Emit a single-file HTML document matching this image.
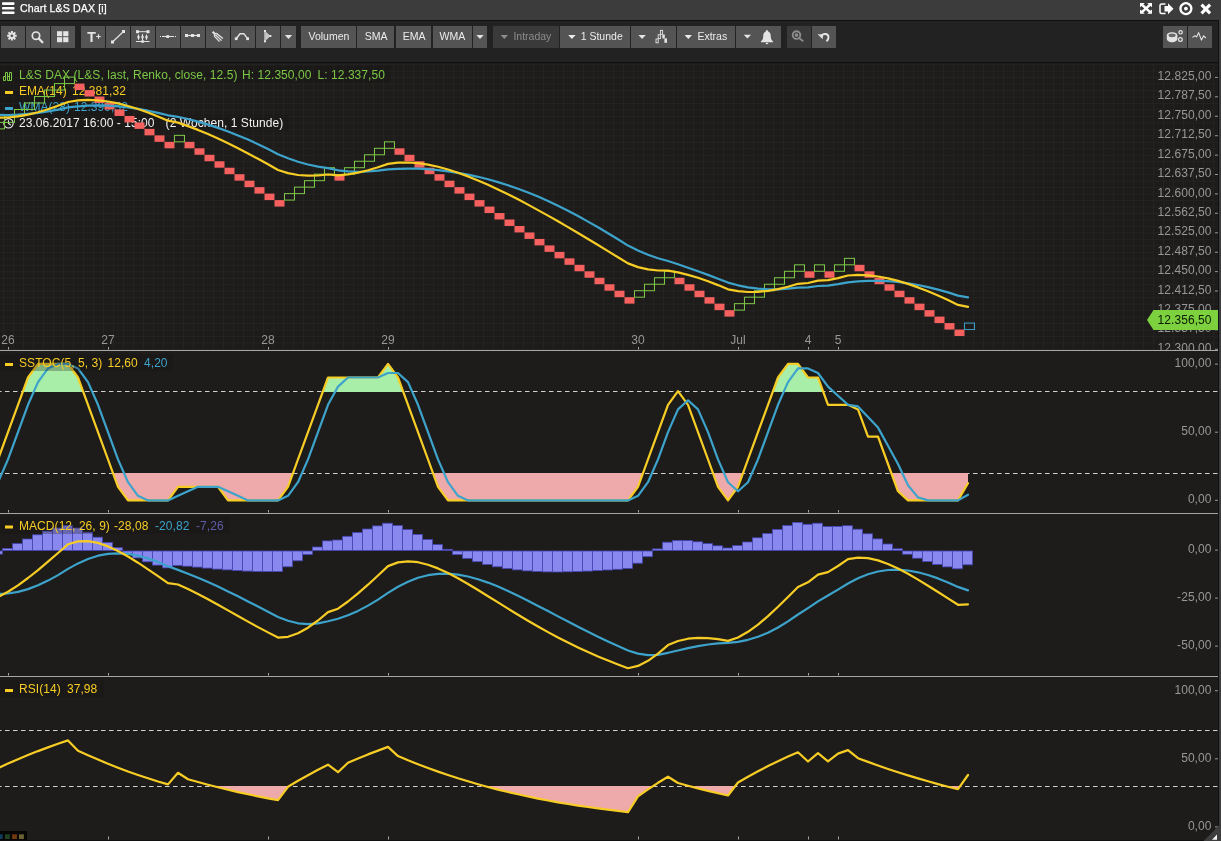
<!DOCTYPE html>
<html><head><meta charset="utf-8"><title>Chart L&amp;S DAX</title>
<style>
html,body{margin:0;padding:0;background:#1d1c1b;overflow:hidden}
body{width:1221px;height:841px;position:relative;font-family:"Liberation Sans",Arial,sans-serif;font-size:12px}
#title{will-change:transform;position:absolute;left:0;top:0;width:1221px;height:19.5px;background:#3c3c3c}
#title .t{position:absolute;left:20px;top:1px;color:#fff;font-size:10.6px;line-height:14px;white-space:nowrap;-webkit-text-stroke:0.25px #fff;letter-spacing:0.12px}
#l1{position:absolute;left:0;top:19.5px;width:1219px;height:1.7px;background:#0e0e0e}
#tool{will-change:transform;position:absolute;left:0;top:21px;width:1218.5px;height:40.5px;background:#222222}
#l2{position:absolute;left:0;top:61.5px;width:1219px;height:1.5px;background:#0e0e0e}
#rb{position:absolute;left:1218.2px;top:19.5px;width:1px;height:822px;background:#101010}
#rb2{position:absolute;left:1219.2px;top:0;width:1.8px;height:841px;background:#3c3c3c}
#bb{position:absolute;left:0;top:840px;width:1219px;height:1px;background:#101010}
.b{position:absolute;top:5px;height:22px;background:#545454;color:#ececec;display:flex;align-items:center;justify-content:center;white-space:nowrap;font-size:10.5px}
.b.d{background:#3a3a3a}
.b svg{display:block;flex:none}
</style></head><body>
<div id="title">
<svg width="16" height="17" style="position:absolute;left:0;top:0"><g fill="#fff"><rect x="2" y="2.3" width="12.5" height="2.6" rx="0.8"/><rect x="2" y="6.9" width="12.5" height="2.6" rx="0.8"/><rect x="2" y="11.5" width="12.5" height="2.6" rx="0.8"/></g></svg>
<div class="t">Chart L&amp;S DAX [i]</div>
<svg width="83" height="19" viewBox="0 0 83 19" style="position:absolute;left:1138px;top:0">
<g fill="#fff">
<g transform="translate(2,3) scale(1.0,0.9)"><path d="M0 0h4.8l-1.5 1.5l2.7 2.7l2.7-2.7l-1.5-1.5h4.8v4.8l-1.5-1.5l-2.7 2.7l2.7 2.7l1.5-1.5v4.8h-4.8l1.5-1.5l-2.7-2.7l-2.7 2.7l1.5 1.5h-4.8v-4.8l1.5 1.5l2.7-2.7l-2.7-2.7l-1.5 1.5z"/></g>
<path d="M26.5 6h3.5v-2.8l5.5 5.5l-5.5 5.5v-2.8h-3.5z"/>
<path d="M27.5 4h-4a1.5 1.5 0 0 0 -1.5 1.5v6.4a1.5 1.5 0 0 0 1.5 1.5h4" fill="none" stroke="#fff" stroke-width="1.5"/>
<path d="M47.9 2.0a6.6 6.6 0 1 0 0.010 0z M47.9 4.3a4.3 4.3 0 1 1 -0.010 0z" fill-rule="evenodd"/><circle cx="47.9" cy="8.6" r="1.9"/>
<path d="M62.4 5.8l2.2-2.2l3.2 3.2l3.2-3.2l2.2 2.2l-3.2 3.2l3.2 3.2l-2.2 2.2l-3.2-3.2l-3.2 3.2l-2.2-2.2l3.2-3.2z"/>
</g></svg>
</div>
<div id="l1"></div>
<div id="tool"><div class="b" style="left:1px;width:24px"><svg width="24" height="22" viewBox="0 0 24 22" ><g transform="translate(-1.1,-1.2)"><g stroke="#e4e4e4" stroke-width="2" stroke-linecap="butt"><path d="M12 6.2v9.6M7.2 11h9.6M8.6 7.6l6.8 6.8M15.4 7.6l-6.8 6.8"/></g><circle cx="12" cy="11" r="3.3" fill="#e4e4e4"/><circle cx="12" cy="11" r="1.4" fill="#545454"/></g></svg></div>
<div class="b" style="left:26px;width:24px"><svg width="24" height="22" viewBox="0 0 24 22" ><circle cx="10" cy="9.7" r="3.7" fill="none" stroke="#e4e4e4" stroke-width="1.7"/><path d="M12.8 12.5l3.6 3.7" stroke="#e4e4e4" stroke-width="2.3" stroke-linecap="round"/></svg></div>
<div class="b" style="left:51px;width:24px"><svg width="24" height="22" viewBox="0 0 24 22" ><g fill="#e4e4e4"><rect x="6" y="5.2" width="5.2" height="5"/><rect x="12.2" y="5.2" width="5.2" height="5"/><rect x="6" y="11.2" width="5.2" height="5"/><rect x="12.2" y="11.2" width="5.2" height="5"/></g></svg></div>
<div class="b" style="left:81px;width:24px"><svg width="24" height="22" viewBox="0 0 24 22" ><text x="6.3" y="16" font-family="Liberation Sans, Arial, sans-serif" font-weight="bold" font-size="14" fill="#e4e4e4">T</text><path d="M15.2 10.5h4.6M17.5 8.2v4.6" stroke="#e4e4e4" stroke-width="1.2"/></svg></div>
<div class="b" style="left:106px;width:24px"><svg width="24" height="22" viewBox="0 0 24 22" ><path d="M6.5 16L17.5 5.5" stroke="#e4e4e4" stroke-width="1.2"/><rect x="5" y="14.5" width="3" height="3" fill="#e4e4e4"/><rect x="16" y="4" width="3" height="3" fill="#e4e4e4"/></svg></div>
<div class="b" style="left:131px;width:24px"><svg width="24" height="22" viewBox="0 0 24 22" ><g stroke="#e4e4e4" stroke-width="1" fill="none"><path d="M6 5.7h11M5 15.5h13.5M7.5 8.5v5.3M11.5 8v6M15.5 8.5v5.3"/></g><g fill="#e4e4e4"><rect x="5" y="4.2" width="3" height="3"/><rect x="15.5" y="4.2" width="3" height="3"/><rect x="6.4" y="9.8" width="2.2" height="2.6"/><rect x="10.4" y="9.8" width="2.2" height="2.6"/><rect x="14.4" y="9.8" width="2.2" height="2.6"/><rect x="10.3" y="14.2" width="2.6" height="2.6"/></g></svg></div>
<div class="b" style="left:156px;width:24px"><svg width="24" height="22" viewBox="0 0 24 22" ><path d="M6 10.5h12" stroke="#e4e4e4" stroke-width="1"/><path d="M4 10.5h1M19 10.5h1" stroke="#e4e4e4" stroke-width="1"/><rect x="10.3" y="9.2" width="2.8" height="2.8" fill="#e4e4e4"/></svg></div>
<div class="b" style="left:181px;width:24px"><svg width="24" height="22" viewBox="0 0 24 22" ><path d="M5 9.5h14" stroke="#e4e4e4" stroke-width="1.2"/><g fill="#e4e4e4"><rect x="4" y="8" width="3" height="3"/><rect x="10" y="8" width="3" height="3"/><rect x="16" y="8" width="3" height="3"/></g></svg></div>
<div class="b" style="left:206px;width:24px"><svg width="24" height="22" viewBox="0 0 24 22" ><g stroke="#e4e4e4" fill="none"><path d="M6.6 5.7l2.1 2.1" stroke-width="2"/><path d="M10.4 7.3Q8 7.2 8.5 10.4M10.4 7.3l6.5 5.3M9.5 8.8l6.1 5.8M8.5 10.4l5.1 5.2" stroke-width="1.3"/></g></svg></div>
<div class="b" style="left:231px;width:24px"><svg width="24" height="22" viewBox="0 0 24 22" ><path d="M5.2 12.7L9 7.8h4l3.6 4.9" stroke="#e4e4e4" stroke-width="1.4" fill="none" stroke-linejoin="round"/><rect x="3.8" y="11.3" width="2.8" height="2.8" fill="#e4e4e4"/><rect x="15.2" y="11.3" width="2.8" height="2.8" fill="#e4e4e4"/></svg></div>
<div class="b" style="left:256px;width:24px"><svg width="24" height="22" viewBox="0 0 24 22" ><path d="M9 5v10.3" stroke="#e4e4e4" stroke-width="1.2"/><path d="M9.5 5.5l5 4.6l-5 4.6z" fill="#c9c9c9"/><g fill="#e4e4e4"><rect x="8" y="4" width="2" height="2"/><rect x="8" y="14.3" width="2" height="2"/><rect x="13.4" y="9" width="2" height="2"/></g></svg></div>
<div class="b" style="left:281px;width:14.5px"><svg width="14" height="22" viewBox="0 0 14 22"><path d="M3.8 9h7.4l-3.7 3.9z" fill="#e4e4e4"/></svg></div>
<div class="b" style="left:300.5px;width:55.2px"><span style="position:absolute;left:8px;top:-1.3px;line-height:22px;color:#ececec">Volumen</span></div>
<div class="b" style="left:357.2px;width:37px"><span style="position:absolute;left:7.5px;top:-1.3px;line-height:22px;color:#ececec">SMA</span></div>
<div class="b" style="left:395.5px;width:35.7px"><span style="position:absolute;left:7.2px;top:-1.3px;line-height:22px;color:#ececec">EMA</span></div>
<div class="b" style="left:432.5px;width:39.5px"><span style="position:absolute;left:7px;top:-1.3px;line-height:22px;color:#ececec">WMA</span></div>
<div class="b" style="left:473.2px;width:13.8px"><svg width="14" height="22" viewBox="0 0 14 22"><path d="M3.3 9h7.4l-3.7 3.9z" fill="#e4e4e4"/></svg></div>
<div class="b d" style="left:493.2px;width:65.5px"><svg width="22" height="22" viewBox="0 0 22 22" style="position:absolute;left:0;top:0"><path d="M7.6 9h7.4l-3.7 3.9z" fill="#8c8c8c"/></svg><span style="position:absolute;left:20.2px;top:-1.3px;line-height:22px;color:#8c8c8c">Intraday</span></div>
<div class="b" style="left:559.9px;width:70.1px"><svg width="22" height="22" viewBox="0 0 22 22" style="position:absolute;left:0;top:0"><path d="M8.2 9h7.4l-3.7 3.9z" fill="#ececec"/></svg><span style="position:absolute;left:20.8px;top:-1.3px;line-height:22px;color:#ececec">1 Stunde</span></div>
<div class="b" style="left:631.2px;width:44.5px"><svg width="44" height="22" viewBox="0 0 44 22" style="position:absolute;left:0;top:0"><path d="M7.4 9h7.4l-3.7 3.9z" fill="#e4e4e4"/><g transform="translate(24.5,0)"><g fill="none" stroke="#e4e4e4" stroke-width="0.9"><rect x="0.5" y="13" width="2.2" height="3.8"/><rect x="2.7" y="8.7" width="2.2" height="3.9"/><rect x="4.9" y="4.4" width="2.2" height="3.9"/></g><g fill="#e4e4e4"><rect x="6.8" y="8.5" width="2.5" height="4"/><rect x="8.9" y="12.4" width="2.6" height="4.4"/></g></g></svg></div>
<div class="b" style="left:677.2px;width:57.8px"><svg width="22" height="22" viewBox="0 0 22 22" style="position:absolute;left:0;top:0"><path d="M7.6 9h7.4l-3.7 3.9z" fill="#ececec"/></svg><span style="position:absolute;left:20.2px;top:-1.3px;line-height:22px;color:#ececec">Extras</span></div>
<div class="b" style="left:736.2px;width:45px"><svg width="45" height="22" viewBox="0 0 45 22" style="position:absolute;left:0;top:0"><path d="M7.7 8.7h7.4l-3.7 3.9z" fill="#e4e4e4"/><g transform="translate(19,0)"><path d="M12 4.3c-0.8 0-1.2 0.5-1.2 1.2c-2 0.8-2.6 2.7-2.6 5c0 2.4-0.9 3.7-2.3 5.1v0.6h12.2v-0.6c-1.4-1.4-2.3-2.7-2.3-5.1c0-2.3-0.6-4.2-2.6-5c0-0.7-0.4-1.2-1.2-1.2z" fill="#e4e4e4"/><rect x="10.8" y="16.8" width="2.4" height="1.3" fill="#e4e4e4"/></g></svg></div>
<div class="b d" style="left:787.2px;width:23.5px"><svg width="24" height="22" viewBox="0 0 24 22" ><circle cx="9.5" cy="9.1" r="3.8" fill="none" stroke="#8c8c8c" stroke-width="1.9"/><circle cx="9.5" cy="9.1" r="1.9" fill="#8c8c8c"/><path d="M12.2 12l4 3.4" stroke="#8c8c8c" stroke-width="1.9"/></svg></div>
<div class="b" style="left:812.2px;width:24px"><svg width="24" height="22" viewBox="0 0 24 22" ><path d="M9.5 9.5c2.5-2.6 6.8-1.8 7 1.5c0.1 1.8-0.8 3.2-2 4.4" fill="none" stroke="#e4e4e4" stroke-width="1.9"/><path d="M5.6 8.2l5.6 0.3l-0.6 4.8z" fill="#e4e4e4"/></svg></div>
<div class="b" style="left:1163px;width:24px"><svg width="24" height="22" viewBox="0 0 24 22" ><g fill="none" stroke="#e4e4e4" stroke-width="1.2"><circle cx="17.6" cy="6.3" r="1.7"/><circle cx="17.4" cy="13.5" r="1.9"/></g><path d="M3.8 9.5c0-4.4 10.6-4.4 10.6 0v3.2c0 4.6-10.6 4.6-10.6 0z" fill="#e4e4e4"/><ellipse cx="9.1" cy="9.3" rx="3.6" ry="1.9" fill="#6a6a6a"/></svg></div>
<div class="b" style="left:1188px;width:24px"><svg width="24" height="22" viewBox="0 0 24 22" ><path d="M4.4 11.4l2.7-1.6l1.6 1.1l1.9-4.3l2.9 7.5l2.2-4.3l2.1 2.2" fill="none" stroke="#e4e4e4" stroke-width="1.1" stroke-linejoin="round"/></svg></div></div>
<div id="l2"></div>
<svg width="1221" height="841" viewBox="0 0 1221 841" style="position:absolute;left:0;top:0;will-change:transform" font-family="Liberation Sans, Arial, sans-serif" font-size="12" letter-spacing="0.06">
<defs><pattern id="grid" x="3" y="77.10" width="10" height="6.473" patternUnits="userSpaceOnUse"><path d="M0.5 0V6.473 M0 0.5H10" stroke="#252322" stroke-width="1" fill="none"/></pattern>
<clipPath id="cm"><rect x="0" y="63" width="1218" height="287"/></clipPath>
<clipPath id="cs"><rect x="0" y="351" width="1218" height="162"/></clipPath>
<clipPath id="cd"><rect x="0" y="514" width="1218" height="162"/></clipPath>
<clipPath id="cr"><rect x="0" y="677" width="1218" height="162"/></clipPath>
<clipPath id="c80"><rect x="0" y="351" width="1218" height="41"/></clipPath>
<clipPath id="c20"><rect x="0" y="473" width="1218" height="40"/></clipPath>
<clipPath id="c30"><rect x="0" y="786" width="1218" height="54"/></clipPath>
</defs>
<rect x="0" y="63" width="1218" height="287" fill="url(#grid)"/>
<rect x="0" y="66" width="390" height="17" fill="#141313" fill-opacity="0.28"/>
<g stroke="#7cc845" fill="none" stroke-width="1"><path d="M3.5 80.5v-4h2v4z M5.5 77v-4.5h2v8 M7.5 80.5h2v-4h-2 M9.5 77v-4.5h2v8h-2"/></g>
<text x="19" y="79" fill="#7cc845">L&amp;S DAX (L&amp;S, last, Renko, close, 12.5)</text>
<text x="242" y="79" fill="#7cc845">H: 12.350,00</text>
<text x="317.5" y="79" fill="#7cc845">L: 12.337,50</text>
<rect x="0" y="83" width="130" height="16" fill="#141313" fill-opacity="0.28"/>
<rect x="5" y="91" width="8" height="3" fill="#f7cd25"/>
<text x="19" y="95" fill="#f7cd25">EMA(14)</text><text x="72" y="95" fill="#f7cd25">12.381,32</text>
<rect x="0" y="99" width="133" height="16" fill="#141313" fill-opacity="0.28"/>
<rect x="5" y="107" width="8" height="3" fill="#3da3cb"/>
<text x="19" y="111" fill="#3da3cb">WMA(28)</text><text x="74" y="111" fill="#3da3cb">12.399,52</text>
<rect x="0" y="115" width="288" height="16" fill="#141313" fill-opacity="0.28"/>
<circle cx="8.5" cy="123.3" r="4.7" fill="none" stroke="#f0f0f0" stroke-width="1.1"/><path d="M8.5 120.2v3.2l2.4 1.7" stroke="#f0f0f0" stroke-width="1.1" fill="none"/>
<text x="19" y="127" fill="#f2f2f2">23.06.2017 16:00 - 15:00</text><text x="165.6" y="127" fill="#f2f2f2">(2 Wochen, 1 Stunde)</text>
<g clip-path="url(#cm)">
<rect x="-5.5" y="122.41" width="10" height="6.47" fill="none" stroke="#7cc845" stroke-width="1"/>
<rect x="4.5" y="115.94" width="10" height="6.47" fill="none" stroke="#7cc845" stroke-width="1"/>
<rect x="14.5" y="109.47" width="10" height="6.47" fill="none" stroke="#7cc845" stroke-width="1"/>
<rect x="24.5" y="102.99" width="10" height="6.47" fill="none" stroke="#7cc845" stroke-width="1"/>
<rect x="34.5" y="96.52" width="10" height="6.47" fill="none" stroke="#7cc845" stroke-width="1"/>
<rect x="44.5" y="90.05" width="10" height="6.47" fill="none" stroke="#7cc845" stroke-width="1"/>
<rect x="54.5" y="83.57" width="10" height="6.47" fill="none" stroke="#7cc845" stroke-width="1"/>
<rect x="64.5" y="77.10" width="10" height="6.47" fill="none" stroke="#7cc845" stroke-width="1"/>
<rect x="74.5" y="83.57" width="10" height="6.47" fill="#f4615f"/>
<rect x="84.5" y="90.05" width="10" height="6.47" fill="#f4615f"/>
<rect x="94.5" y="96.52" width="10" height="6.47" fill="#f4615f"/>
<rect x="104.5" y="102.99" width="10" height="6.47" fill="#f4615f"/>
<rect x="114.5" y="109.47" width="10" height="6.47" fill="#f4615f"/>
<rect x="124.5" y="115.94" width="10" height="6.47" fill="#f4615f"/>
<rect x="134.5" y="122.41" width="10" height="6.47" fill="#f4615f"/>
<rect x="144.5" y="128.88" width="10" height="6.47" fill="#f4615f"/>
<rect x="154.5" y="135.36" width="10" height="6.47" fill="#f4615f"/>
<rect x="164.5" y="141.83" width="10" height="6.47" fill="#f4615f"/>
<rect x="174.5" y="135.36" width="10" height="6.47" fill="none" stroke="#7cc845" stroke-width="1"/>
<rect x="184.5" y="141.83" width="10" height="6.47" fill="#f4615f"/>
<rect x="194.5" y="148.30" width="10" height="6.47" fill="#f4615f"/>
<rect x="204.5" y="154.78" width="10" height="6.47" fill="#f4615f"/>
<rect x="214.5" y="161.25" width="10" height="6.47" fill="#f4615f"/>
<rect x="224.5" y="167.72" width="10" height="6.47" fill="#f4615f"/>
<rect x="234.5" y="174.19" width="10" height="6.47" fill="#f4615f"/>
<rect x="244.5" y="180.67" width="10" height="6.47" fill="#f4615f"/>
<rect x="254.5" y="187.14" width="10" height="6.47" fill="#f4615f"/>
<rect x="264.5" y="193.61" width="10" height="6.47" fill="#f4615f"/>
<rect x="274.5" y="200.09" width="10" height="6.47" fill="#f4615f"/>
<rect x="284.5" y="193.61" width="10" height="6.47" fill="none" stroke="#7cc845" stroke-width="1"/>
<rect x="294.5" y="187.14" width="10" height="6.47" fill="none" stroke="#7cc845" stroke-width="1"/>
<rect x="304.5" y="180.67" width="10" height="6.47" fill="none" stroke="#7cc845" stroke-width="1"/>
<rect x="314.5" y="174.19" width="10" height="6.47" fill="none" stroke="#7cc845" stroke-width="1"/>
<rect x="324.5" y="167.72" width="10" height="6.47" fill="none" stroke="#7cc845" stroke-width="1"/>
<rect x="334.5" y="174.19" width="10" height="6.47" fill="#f4615f"/>
<rect x="344.5" y="167.72" width="10" height="6.47" fill="none" stroke="#7cc845" stroke-width="1"/>
<rect x="354.5" y="161.25" width="10" height="6.47" fill="none" stroke="#7cc845" stroke-width="1"/>
<rect x="364.5" y="154.78" width="10" height="6.47" fill="none" stroke="#7cc845" stroke-width="1"/>
<rect x="374.5" y="148.30" width="10" height="6.47" fill="none" stroke="#7cc845" stroke-width="1"/>
<rect x="384.5" y="141.83" width="10" height="6.47" fill="none" stroke="#7cc845" stroke-width="1"/>
<rect x="394.5" y="148.30" width="10" height="6.47" fill="#f4615f"/>
<rect x="404.5" y="154.78" width="10" height="6.47" fill="#f4615f"/>
<rect x="414.5" y="161.25" width="10" height="6.47" fill="#f4615f"/>
<rect x="424.5" y="167.72" width="10" height="6.47" fill="#f4615f"/>
<rect x="434.5" y="174.19" width="10" height="6.47" fill="#f4615f"/>
<rect x="444.5" y="180.67" width="10" height="6.47" fill="#f4615f"/>
<rect x="454.5" y="187.14" width="10" height="6.47" fill="#f4615f"/>
<rect x="464.5" y="193.61" width="10" height="6.47" fill="#f4615f"/>
<rect x="474.5" y="200.09" width="10" height="6.47" fill="#f4615f"/>
<rect x="484.5" y="206.56" width="10" height="6.47" fill="#f4615f"/>
<rect x="494.5" y="213.03" width="10" height="6.47" fill="#f4615f"/>
<rect x="504.5" y="219.51" width="10" height="6.47" fill="#f4615f"/>
<rect x="514.5" y="225.98" width="10" height="6.47" fill="#f4615f"/>
<rect x="524.5" y="232.45" width="10" height="6.47" fill="#f4615f"/>
<rect x="534.5" y="238.92" width="10" height="6.47" fill="#f4615f"/>
<rect x="544.5" y="245.40" width="10" height="6.47" fill="#f4615f"/>
<rect x="554.5" y="251.87" width="10" height="6.47" fill="#f4615f"/>
<rect x="564.5" y="258.34" width="10" height="6.47" fill="#f4615f"/>
<rect x="574.5" y="264.82" width="10" height="6.47" fill="#f4615f"/>
<rect x="584.5" y="271.29" width="10" height="6.47" fill="#f4615f"/>
<rect x="594.5" y="277.76" width="10" height="6.47" fill="#f4615f"/>
<rect x="604.5" y="284.24" width="10" height="6.47" fill="#f4615f"/>
<rect x="614.5" y="290.71" width="10" height="6.47" fill="#f4615f"/>
<rect x="624.5" y="297.18" width="10" height="6.47" fill="#f4615f"/>
<rect x="634.5" y="290.71" width="10" height="6.47" fill="none" stroke="#7cc845" stroke-width="1"/>
<rect x="644.5" y="284.24" width="10" height="6.47" fill="none" stroke="#7cc845" stroke-width="1"/>
<rect x="654.5" y="277.76" width="10" height="6.47" fill="none" stroke="#7cc845" stroke-width="1"/>
<rect x="664.5" y="271.29" width="10" height="6.47" fill="none" stroke="#7cc845" stroke-width="1"/>
<rect x="674.5" y="277.76" width="10" height="6.47" fill="#f4615f"/>
<rect x="684.5" y="284.24" width="10" height="6.47" fill="#f4615f"/>
<rect x="694.5" y="290.71" width="10" height="6.47" fill="#f4615f"/>
<rect x="704.5" y="297.18" width="10" height="6.47" fill="#f4615f"/>
<rect x="714.5" y="303.65" width="10" height="6.47" fill="#f4615f"/>
<rect x="724.5" y="310.13" width="10" height="6.47" fill="#f4615f"/>
<rect x="734.5" y="303.65" width="10" height="6.47" fill="none" stroke="#7cc845" stroke-width="1"/>
<rect x="744.5" y="297.18" width="10" height="6.47" fill="none" stroke="#7cc845" stroke-width="1"/>
<rect x="754.5" y="290.71" width="10" height="6.47" fill="none" stroke="#7cc845" stroke-width="1"/>
<rect x="764.5" y="284.24" width="10" height="6.47" fill="none" stroke="#7cc845" stroke-width="1"/>
<rect x="774.5" y="277.76" width="10" height="6.47" fill="none" stroke="#7cc845" stroke-width="1"/>
<rect x="784.5" y="271.29" width="10" height="6.47" fill="none" stroke="#7cc845" stroke-width="1"/>
<rect x="794.5" y="264.82" width="10" height="6.47" fill="none" stroke="#7cc845" stroke-width="1"/>
<rect x="804.5" y="271.29" width="10" height="6.47" fill="#f4615f"/>
<rect x="814.5" y="264.82" width="10" height="6.47" fill="none" stroke="#7cc845" stroke-width="1"/>
<rect x="824.5" y="271.29" width="10" height="6.47" fill="#f4615f"/>
<rect x="834.5" y="264.82" width="10" height="6.47" fill="none" stroke="#7cc845" stroke-width="1"/>
<rect x="844.5" y="258.34" width="10" height="6.47" fill="none" stroke="#7cc845" stroke-width="1"/>
<rect x="854.5" y="264.82" width="10" height="6.47" fill="#f4615f"/>
<rect x="864.5" y="271.29" width="10" height="6.47" fill="#f4615f"/>
<rect x="874.5" y="277.76" width="10" height="6.47" fill="#f4615f"/>
<rect x="884.5" y="284.24" width="10" height="6.47" fill="#f4615f"/>
<rect x="894.5" y="290.71" width="10" height="6.47" fill="#f4615f"/>
<rect x="904.5" y="297.18" width="10" height="6.47" fill="#f4615f"/>
<rect x="914.5" y="303.65" width="10" height="6.47" fill="#f4615f"/>
<rect x="924.5" y="310.13" width="10" height="6.47" fill="#f4615f"/>
<rect x="934.5" y="316.60" width="10" height="6.47" fill="#f4615f"/>
<rect x="944.5" y="323.07" width="10" height="6.47" fill="#f4615f"/>
<rect x="954.5" y="329.55" width="10" height="6.47" fill="#f4615f"/>
<rect x="964.5" y="323.07" width="10" height="6.47" fill="none" stroke="#3aa0c8" stroke-width="1"/>
</g>
<g clip-path="url(#cm)" fill="none" stroke-linejoin="round" stroke-linecap="round">
<polyline points="-2.0,114.9 8.0,115.0 18.0,114.7 28.0,113.9 38.0,112.9 48.0,111.4 58.0,109.6 68.0,107.4 78.0,106.3 88.0,105.6 98.0,105.4 108.0,105.7 118.0,106.4 128.0,107.5 138.0,108.9 148.0,110.7 158.0,112.9 168.0,115.3 178.0,116.8 188.0,119.0 198.0,121.6 208.0,124.6 218.0,127.9 228.0,131.5 238.0,135.4 248.0,139.6 258.0,144.2 268.0,149.1 278.0,154.2 288.0,158.3 298.0,161.7 308.0,164.5 318.0,166.6 328.0,168.1 338.0,170.3 348.0,171.4 358.0,171.8 368.0,171.5 378.0,170.7 388.0,169.4 398.0,168.8 408.0,168.6 418.0,168.7 428.0,169.2 438.0,170.1 448.0,171.3 458.0,172.8 468.0,174.7 478.0,176.8 488.0,179.3 498.0,182.1 508.0,185.3 518.0,188.7 528.0,192.5 538.0,196.5 548.0,200.9 558.0,205.7 568.0,210.7 578.0,216.0 588.0,221.6 598.0,227.3 608.0,233.2 618.0,239.3 628.0,245.6 638.0,250.6 648.0,254.8 658.0,258.3 668.0,261.0 678.0,264.3 688.0,267.7 698.0,271.2 708.0,274.9 718.0,278.7 728.0,282.6 738.0,285.3 748.0,287.3 758.0,288.6 768.0,289.3 778.0,289.3 788.0,288.7 798.0,287.6 808.0,287.3 818.0,286.0 828.0,285.6 838.0,284.2 848.0,282.3 858.0,281.4 868.0,280.9 878.0,280.8 888.0,281.2 898.0,282.0 908.0,283.3 918.0,285.0 928.0,287.1 938.0,289.6 948.0,292.4 958.0,295.6 968.0,297.4" stroke="#3da3cb" stroke-width="2.2"/>
<polyline points="-2.0,117.7 8.0,117.5 18.0,116.4 28.0,114.6 38.0,112.2 48.0,109.3 58.0,105.8 68.0,102.0 78.0,100.4 88.0,99.9 98.0,100.3 108.0,101.5 118.0,103.4 128.0,106.0 138.0,109.0 148.0,112.5 158.0,116.4 168.0,120.7 178.0,122.6 188.0,126.1 198.0,129.9 208.0,134.1 218.0,138.6 228.0,143.3 238.0,148.3 248.0,153.5 258.0,158.8 268.0,164.3 278.0,170.0 288.0,173.1 298.0,175.0 308.0,175.7 318.0,175.5 328.0,174.5 338.0,175.3 348.0,174.3 358.0,172.6 368.0,170.2 378.0,167.3 388.0,163.9 398.0,162.7 408.0,162.5 418.0,163.2 428.0,164.6 438.0,166.8 448.0,169.5 458.0,172.7 468.0,176.4 478.0,180.4 488.0,184.7 498.0,189.4 508.0,194.3 518.0,199.3 528.0,204.6 538.0,210.1 548.0,215.6 558.0,221.3 568.0,227.1 578.0,233.0 588.0,239.0 598.0,245.0 608.0,251.1 618.0,257.3 628.0,263.4 638.0,267.1 648.0,269.4 658.0,270.5 668.0,270.6 678.0,272.4 688.0,274.9 698.0,277.8 708.0,281.3 718.0,285.1 728.0,289.3 738.0,291.2 748.0,292.0 758.0,291.8 768.0,290.8 778.0,289.1 788.0,286.7 798.0,283.8 808.0,283.0 818.0,280.6 828.0,280.2 838.0,278.1 848.0,275.5 858.0,274.9 868.0,275.3 878.0,276.5 888.0,278.4 898.0,280.9 908.0,283.9 918.0,287.4 928.0,291.3 938.0,295.6 948.0,300.1 958.0,304.9 968.0,306.9" stroke="#f7cd25" stroke-width="2.2"/>
</g>
<text x="1211.5" y="80.0" text-anchor="end" fill="#979797" clip-path="url(#cm)">12.825,00</text>
<rect x="1215" y="76.9" width="3" height="1" fill="#979797" clip-path="url(#cm)"/>
<text x="1211.5" y="99.4" text-anchor="end" fill="#979797" clip-path="url(#cm)">12.787,50</text>
<rect x="1215" y="96.3" width="3" height="1" fill="#979797" clip-path="url(#cm)"/>
<text x="1211.5" y="118.8" text-anchor="end" fill="#979797" clip-path="url(#cm)">12.750,00</text>
<rect x="1215" y="115.7" width="3" height="1" fill="#979797" clip-path="url(#cm)"/>
<text x="1211.5" y="138.3" text-anchor="end" fill="#979797" clip-path="url(#cm)">12.712,50</text>
<rect x="1215" y="135.2" width="3" height="1" fill="#979797" clip-path="url(#cm)"/>
<text x="1211.5" y="157.7" text-anchor="end" fill="#979797" clip-path="url(#cm)">12.675,00</text>
<rect x="1215" y="154.6" width="3" height="1" fill="#979797" clip-path="url(#cm)"/>
<text x="1211.5" y="177.1" text-anchor="end" fill="#979797" clip-path="url(#cm)">12.637,50</text>
<rect x="1215" y="174.0" width="3" height="1" fill="#979797" clip-path="url(#cm)"/>
<text x="1211.5" y="196.5" text-anchor="end" fill="#979797" clip-path="url(#cm)">12.600,00</text>
<rect x="1215" y="193.4" width="3" height="1" fill="#979797" clip-path="url(#cm)"/>
<text x="1211.5" y="215.9" text-anchor="end" fill="#979797" clip-path="url(#cm)">12.562,50</text>
<rect x="1215" y="212.8" width="3" height="1" fill="#979797" clip-path="url(#cm)"/>
<text x="1211.5" y="235.4" text-anchor="end" fill="#979797" clip-path="url(#cm)">12.525,00</text>
<rect x="1215" y="232.3" width="3" height="1" fill="#979797" clip-path="url(#cm)"/>
<text x="1211.5" y="254.8" text-anchor="end" fill="#979797" clip-path="url(#cm)">12.487,50</text>
<rect x="1215" y="251.7" width="3" height="1" fill="#979797" clip-path="url(#cm)"/>
<text x="1211.5" y="274.2" text-anchor="end" fill="#979797" clip-path="url(#cm)">12.450,00</text>
<rect x="1215" y="271.1" width="3" height="1" fill="#979797" clip-path="url(#cm)"/>
<text x="1211.5" y="293.6" text-anchor="end" fill="#979797" clip-path="url(#cm)">12.412,50</text>
<rect x="1215" y="290.5" width="3" height="1" fill="#979797" clip-path="url(#cm)"/>
<text x="1211.5" y="313.0" text-anchor="end" fill="#979797" clip-path="url(#cm)">12.375,00</text>
<rect x="1215" y="309.9" width="3" height="1" fill="#979797" clip-path="url(#cm)"/>
<text x="1211.5" y="332.4" text-anchor="end" fill="#979797" clip-path="url(#cm)">12.337,50</text>
<rect x="1215" y="329.3" width="3" height="1" fill="#979797" clip-path="url(#cm)"/>
<text x="1211.5" y="351.9" text-anchor="end" fill="#979797" clip-path="url(#cm)">12.300,00</text>
<rect x="1215" y="348.8" width="3" height="1" fill="#979797" clip-path="url(#cm)"/>
<text x="8" y="344" text-anchor="middle" fill="#979797">26</text>
<text x="108" y="344" text-anchor="middle" fill="#979797">27</text>
<text x="268" y="344" text-anchor="middle" fill="#979797">28</text>
<text x="388" y="344" text-anchor="middle" fill="#979797">29</text>
<text x="638" y="344" text-anchor="middle" fill="#979797">30</text>
<text x="738" y="344" text-anchor="middle" fill="#979797">Jul</text>
<text x="808" y="344" text-anchor="middle" fill="#979797">4</text>
<text x="838" y="344" text-anchor="middle" fill="#979797">5</text>
<rect x="0" y="350" width="1218" height="1" fill="#a6a6a6"/>
<rect x="8" y="347" width="1" height="2.5" fill="#a6a6a6"/>
<rect x="108" y="347" width="1" height="2.5" fill="#a6a6a6"/>
<rect x="268" y="347" width="1" height="2.5" fill="#a6a6a6"/>
<rect x="388" y="347" width="1" height="2.5" fill="#a6a6a6"/>
<rect x="638" y="347" width="1" height="2.5" fill="#a6a6a6"/>
<rect x="738" y="347" width="1" height="2.5" fill="#a6a6a6"/>
<rect x="808" y="347" width="1" height="2.5" fill="#a6a6a6"/>
<rect x="838" y="347" width="1" height="2.5" fill="#a6a6a6"/>
<rect x="0" y="513" width="1218" height="1" fill="#a6a6a6"/>
<rect x="8" y="510" width="1" height="2.5" fill="#a6a6a6"/>
<rect x="108" y="510" width="1" height="2.5" fill="#a6a6a6"/>
<rect x="268" y="510" width="1" height="2.5" fill="#a6a6a6"/>
<rect x="388" y="510" width="1" height="2.5" fill="#a6a6a6"/>
<rect x="638" y="510" width="1" height="2.5" fill="#a6a6a6"/>
<rect x="738" y="510" width="1" height="2.5" fill="#a6a6a6"/>
<rect x="808" y="510" width="1" height="2.5" fill="#a6a6a6"/>
<rect x="838" y="510" width="1" height="2.5" fill="#a6a6a6"/>
<rect x="0" y="676" width="1218" height="1" fill="#a6a6a6"/>
<rect x="8" y="673" width="1" height="2.5" fill="#a6a6a6"/>
<rect x="108" y="673" width="1" height="2.5" fill="#a6a6a6"/>
<rect x="268" y="673" width="1" height="2.5" fill="#a6a6a6"/>
<rect x="388" y="673" width="1" height="2.5" fill="#a6a6a6"/>
<rect x="638" y="673" width="1" height="2.5" fill="#a6a6a6"/>
<rect x="738" y="673" width="1" height="2.5" fill="#a6a6a6"/>
<rect x="808" y="673" width="1" height="2.5" fill="#a6a6a6"/>
<rect x="838" y="673" width="1" height="2.5" fill="#a6a6a6"/>
<rect x="8" y="836.5" width="1" height="3" fill="#a6a6a6"/>
<rect x="108" y="836.5" width="1" height="3" fill="#a6a6a6"/>
<rect x="268" y="836.5" width="1" height="3" fill="#a6a6a6"/>
<rect x="388" y="836.5" width="1" height="3" fill="#a6a6a6"/>
<rect x="638" y="836.5" width="1" height="3" fill="#a6a6a6"/>
<rect x="738" y="836.5" width="1" height="3" fill="#a6a6a6"/>
<rect x="808" y="836.5" width="1" height="3" fill="#a6a6a6"/>
<rect x="838" y="836.5" width="1" height="3" fill="#a6a6a6"/>
<path d="M1147 320 L1153.5 310 H1218 V330 H1153.5 Z" fill="#7dd13f"/>
<text x="1211.5" y="324.3" text-anchor="end" fill="#0a1a00">12.356,50</text>
<line x1="0" y1="391.5" x2="1218" y2="391.5" stroke="#d2d2d2" stroke-width="1" stroke-dasharray="4.5 3.5" stroke-dashoffset="3"/>
<line x1="0" y1="473.5" x2="1218" y2="473.5" stroke="#d2d2d2" stroke-width="1" stroke-dasharray="4.5 3.5" stroke-dashoffset="3"/>
<line x1="0" y1="730.5" x2="1218" y2="730.5" stroke="#d2d2d2" stroke-width="1" stroke-dasharray="4.5 3.5" stroke-dashoffset="3"/>
<line x1="0" y1="786.5" x2="1218" y2="786.5" stroke="#d2d2d2" stroke-width="1" stroke-dasharray="4.5 3.5" stroke-dashoffset="3"/>
<g clip-path="url(#c80)"><polygon points="-2.0,459.4 8.0,432.1 18.0,404.8 28.0,377.5 38.0,363.9 48.0,363.9 58.0,363.9 68.0,363.9 78.0,377.5 88.0,404.8 98.0,432.1 108.0,459.4 118.0,486.8 128.0,500.4 138.0,500.4 148.0,500.4 158.0,500.4 168.0,500.4 178.0,486.8 188.0,486.8 198.0,486.8 208.0,486.8 218.0,486.8 228.0,500.4 238.0,500.4 248.0,500.4 258.0,500.4 268.0,500.4 278.0,500.4 288.0,486.8 298.0,459.4 308.0,432.1 318.0,404.8 328.0,377.5 338.0,377.5 348.0,377.5 358.0,377.5 368.0,377.5 378.0,377.5 388.0,363.9 398.0,377.5 408.0,404.8 418.0,432.1 428.0,459.4 438.0,486.8 448.0,500.4 458.0,500.4 468.0,500.4 478.0,500.4 488.0,500.4 498.0,500.4 508.0,500.4 518.0,500.4 528.0,500.4 538.0,500.4 548.0,500.4 558.0,500.4 568.0,500.4 578.0,500.4 588.0,500.4 598.0,500.4 608.0,500.4 618.0,500.4 628.0,500.4 638.0,486.8 648.0,459.4 658.0,432.1 668.0,404.8 678.0,391.2 688.0,404.8 698.0,432.1 708.0,459.4 718.0,486.8 728.0,500.4 738.0,486.8 748.0,459.4 758.0,432.1 768.0,404.8 778.0,377.5 788.0,363.9 798.0,363.9 808.0,377.5 818.0,377.5 828.0,404.8 838.0,404.8 848.0,404.8 858.0,409.4 868.0,436.7 878.0,436.7 888.0,464.0 898.0,491.3 908.0,500.4 918.0,500.4 928.0,500.4 938.0,500.4 948.0,500.4 958.0,500.4 968.0,483.2 968,392.0 -2,392.0" fill="#a8eea8" fill-rule="evenodd"/></g>
<g clip-path="url(#c20)"><polygon points="-2.0,459.4 8.0,432.1 18.0,404.8 28.0,377.5 38.0,363.9 48.0,363.9 58.0,363.9 68.0,363.9 78.0,377.5 88.0,404.8 98.0,432.1 108.0,459.4 118.0,486.8 128.0,500.4 138.0,500.4 148.0,500.4 158.0,500.4 168.0,500.4 178.0,486.8 188.0,486.8 198.0,486.8 208.0,486.8 218.0,486.8 228.0,500.4 238.0,500.4 248.0,500.4 258.0,500.4 268.0,500.4 278.0,500.4 288.0,486.8 298.0,459.4 308.0,432.1 318.0,404.8 328.0,377.5 338.0,377.5 348.0,377.5 358.0,377.5 368.0,377.5 378.0,377.5 388.0,363.9 398.0,377.5 408.0,404.8 418.0,432.1 428.0,459.4 438.0,486.8 448.0,500.4 458.0,500.4 468.0,500.4 478.0,500.4 488.0,500.4 498.0,500.4 508.0,500.4 518.0,500.4 528.0,500.4 538.0,500.4 548.0,500.4 558.0,500.4 568.0,500.4 578.0,500.4 588.0,500.4 598.0,500.4 608.0,500.4 618.0,500.4 628.0,500.4 638.0,486.8 648.0,459.4 658.0,432.1 668.0,404.8 678.0,391.2 688.0,404.8 698.0,432.1 708.0,459.4 718.0,486.8 728.0,500.4 738.0,486.8 748.0,459.4 758.0,432.1 768.0,404.8 778.0,377.5 788.0,363.9 798.0,363.9 808.0,377.5 818.0,377.5 828.0,404.8 838.0,404.8 848.0,404.8 858.0,409.4 868.0,436.7 878.0,436.7 888.0,464.0 898.0,491.3 908.0,500.4 918.0,500.4 928.0,500.4 938.0,500.4 948.0,500.4 958.0,500.4 968.0,483.2 968,473.0 -2,473.0" fill="#eeaaaa" fill-rule="evenodd"/></g>
<g clip-path="url(#cs)" fill="none" stroke-linejoin="round" stroke-linecap="round">
<polyline points="-2.0,459.4 8.0,432.1 18.0,404.8 28.0,377.5 38.0,363.9 48.0,363.9 58.0,363.9 68.0,363.9 78.0,377.5 88.0,404.8 98.0,432.1 108.0,459.4 118.0,486.8 128.0,500.4 138.0,500.4 148.0,500.4 158.0,500.4 168.0,500.4 178.0,486.8 188.0,486.8 198.0,486.8 208.0,486.8 218.0,486.8 228.0,500.4 238.0,500.4 248.0,500.4 258.0,500.4 268.0,500.4 278.0,500.4 288.0,486.8 298.0,459.4 308.0,432.1 318.0,404.8 328.0,377.5 338.0,377.5 348.0,377.5 358.0,377.5 368.0,377.5 378.0,377.5 388.0,363.9 398.0,377.5 408.0,404.8 418.0,432.1 428.0,459.4 438.0,486.8 448.0,500.4 458.0,500.4 468.0,500.4 478.0,500.4 488.0,500.4 498.0,500.4 508.0,500.4 518.0,500.4 528.0,500.4 538.0,500.4 548.0,500.4 558.0,500.4 568.0,500.4 578.0,500.4 588.0,500.4 598.0,500.4 608.0,500.4 618.0,500.4 628.0,500.4 638.0,486.8 648.0,459.4 658.0,432.1 668.0,404.8 678.0,391.2 688.0,404.8 698.0,432.1 708.0,459.4 718.0,486.8 728.0,500.4 738.0,486.8 748.0,459.4 758.0,432.1 768.0,404.8 778.0,377.5 788.0,363.9 798.0,363.9 808.0,377.5 818.0,377.5 828.0,404.8 838.0,404.8 848.0,404.8 858.0,409.4 868.0,436.7 878.0,436.7 888.0,464.0 898.0,491.3 908.0,500.4 918.0,500.4 928.0,500.4 938.0,500.4 948.0,500.4 958.0,500.4 968.0,483.2" stroke="#f7cd25" stroke-width="2.2"/>
<polyline points="-2.0,482.2 8.0,459.4 18.0,432.1 28.0,404.8 38.0,382.1 48.0,368.4 58.0,363.9 68.0,363.9 78.0,368.4 88.0,382.1 98.0,404.8 108.0,432.1 118.0,459.4 128.0,482.2 138.0,495.8 148.0,500.4 158.0,500.4 168.0,500.4 178.0,495.8 188.0,491.3 198.0,486.8 208.0,486.8 218.0,486.8 228.0,491.3 238.0,495.8 248.0,500.4 258.0,500.4 268.0,500.4 278.0,500.4 288.0,495.8 298.0,482.2 308.0,459.4 318.0,432.1 328.0,404.8 338.0,386.6 348.0,377.5 358.0,377.5 368.0,377.5 378.0,377.5 388.0,373.0 398.0,373.0 408.0,382.1 418.0,404.8 428.0,432.1 438.0,459.4 448.0,482.2 458.0,495.8 468.0,500.4 478.0,500.4 488.0,500.4 498.0,500.4 508.0,500.4 518.0,500.4 528.0,500.4 538.0,500.4 548.0,500.4 558.0,500.4 568.0,500.4 578.0,500.4 588.0,500.4 598.0,500.4 608.0,500.4 618.0,500.4 628.0,500.4 638.0,495.8 648.0,482.2 658.0,459.4 668.0,432.1 678.0,409.4 688.0,400.3 698.0,409.4 708.0,432.1 718.0,459.4 728.0,482.2 738.0,491.3 748.0,482.2 758.0,459.4 768.0,432.1 778.0,404.8 788.0,382.1 798.0,368.4 808.0,368.4 818.0,373.0 828.0,386.6 838.0,395.8 848.0,404.8 858.0,406.4 868.0,417.0 878.0,427.6 888.0,445.8 898.0,464.0 908.0,485.2 918.0,497.4 928.0,500.4 938.0,500.4 948.0,500.4 958.0,500.4 968.0,494.7" stroke="#3da3cb" stroke-width="2.2"/>
</g>
<rect x="0" y="354" width="173" height="17" fill="#141313" fill-opacity="0.28"/>
<rect x="5" y="363" width="8" height="3" fill="#f7cd25"/>
<text x="19" y="367.3" fill="#f7cd25">SSTOC(5, 5, 3)</text><text x="107.5" y="367.3" fill="#f7cd25">12,60</text><text x="144" y="367.3" fill="#3da3cb">4,20</text>
<text x="1211.5" y="366.9" text-anchor="end" fill="#979797">100,00</text>
<rect x="1215" y="363.6" width="3" height="1" fill="#979797"/>
<text x="1211.5" y="435.0" text-anchor="end" fill="#979797">50,00</text>
<rect x="1215" y="431.7" width="3" height="1" fill="#979797"/>
<text x="1211.5" y="503.1" text-anchor="end" fill="#979797">0,00</text>
<rect x="1215" y="499.8" width="3" height="1" fill="#979797"/>
<g clip-path="url(#cd)">
<rect x="-7.5" y="551.0" width="10" height="3.1" fill="#8888ee" stroke="#4545b4" stroke-width="0.8"/>
<rect x="2.5" y="548.4" width="10" height="2.1" fill="#8888ee" stroke="#4545b4" stroke-width="0.8"/>
<rect x="12.5" y="543.6" width="10" height="6.9" fill="#8888ee" stroke="#4545b4" stroke-width="0.8"/>
<rect x="22.5" y="539.0" width="10" height="11.5" fill="#8888ee" stroke="#4545b4" stroke-width="0.8"/>
<rect x="32.5" y="534.8" width="10" height="15.7" fill="#8888ee" stroke="#4545b4" stroke-width="0.8"/>
<rect x="42.5" y="531.1" width="10" height="19.4" fill="#8888ee" stroke="#4545b4" stroke-width="0.8"/>
<rect x="52.5" y="528.0" width="10" height="22.5" fill="#8888ee" stroke="#4545b4" stroke-width="0.8"/>
<rect x="62.5" y="525.4" width="10" height="25.1" fill="#8888ee" stroke="#4545b4" stroke-width="0.8"/>
<rect x="72.5" y="528.0" width="10" height="22.5" fill="#8888ee" stroke="#4545b4" stroke-width="0.8"/>
<rect x="82.5" y="532.2" width="10" height="18.3" fill="#8888ee" stroke="#4545b4" stroke-width="0.8"/>
<rect x="92.5" y="537.2" width="10" height="13.3" fill="#8888ee" stroke="#4545b4" stroke-width="0.8"/>
<rect x="102.5" y="542.5" width="10" height="8.0" fill="#8888ee" stroke="#4545b4" stroke-width="0.8"/>
<rect x="112.5" y="547.7" width="10" height="2.8" fill="#8888ee" stroke="#4545b4" stroke-width="0.8"/>
<rect x="122.5" y="551.0" width="10" height="2.5" fill="#8888ee" stroke="#4545b4" stroke-width="0.8"/>
<rect x="132.5" y="551.0" width="10" height="6.9" fill="#8888ee" stroke="#4545b4" stroke-width="0.8"/>
<rect x="142.5" y="551.0" width="10" height="10.8" fill="#8888ee" stroke="#4545b4" stroke-width="0.8"/>
<rect x="152.5" y="551.0" width="10" height="14.1" fill="#8888ee" stroke="#4545b4" stroke-width="0.8"/>
<rect x="162.5" y="551.0" width="10" height="16.9" fill="#8888ee" stroke="#4545b4" stroke-width="0.8"/>
<rect x="172.5" y="551.0" width="10" height="14.5" fill="#8888ee" stroke="#4545b4" stroke-width="0.8"/>
<rect x="182.5" y="551.0" width="10" height="15.2" fill="#8888ee" stroke="#4545b4" stroke-width="0.8"/>
<rect x="192.5" y="551.0" width="10" height="16.1" fill="#8888ee" stroke="#4545b4" stroke-width="0.8"/>
<rect x="202.5" y="551.0" width="10" height="17.1" fill="#8888ee" stroke="#4545b4" stroke-width="0.8"/>
<rect x="212.5" y="551.0" width="10" height="18.1" fill="#8888ee" stroke="#4545b4" stroke-width="0.8"/>
<rect x="222.5" y="551.0" width="10" height="18.9" fill="#8888ee" stroke="#4545b4" stroke-width="0.8"/>
<rect x="232.5" y="551.0" width="10" height="19.6" fill="#8888ee" stroke="#4545b4" stroke-width="0.8"/>
<rect x="242.5" y="551.0" width="10" height="20.1" fill="#8888ee" stroke="#4545b4" stroke-width="0.8"/>
<rect x="252.5" y="551.0" width="10" height="20.5" fill="#8888ee" stroke="#4545b4" stroke-width="0.8"/>
<rect x="262.5" y="551.0" width="10" height="20.6" fill="#8888ee" stroke="#4545b4" stroke-width="0.8"/>
<rect x="272.5" y="551.0" width="10" height="20.6" fill="#8888ee" stroke="#4545b4" stroke-width="0.8"/>
<rect x="282.5" y="551.0" width="10" height="15.8" fill="#8888ee" stroke="#4545b4" stroke-width="0.8"/>
<rect x="292.5" y="551.0" width="10" height="9.8" fill="#8888ee" stroke="#4545b4" stroke-width="0.8"/>
<rect x="302.5" y="551.0" width="10" height="3.4" fill="#8888ee" stroke="#4545b4" stroke-width="0.8"/>
<rect x="312.5" y="547.0" width="10" height="3.5" fill="#8888ee" stroke="#4545b4" stroke-width="0.8"/>
<rect x="322.5" y="540.9" width="10" height="9.6" fill="#8888ee" stroke="#4545b4" stroke-width="0.8"/>
<rect x="332.5" y="540.0" width="10" height="10.5" fill="#8888ee" stroke="#4545b4" stroke-width="0.8"/>
<rect x="342.5" y="536.3" width="10" height="14.2" fill="#8888ee" stroke="#4545b4" stroke-width="0.8"/>
<rect x="352.5" y="532.5" width="10" height="18.0" fill="#8888ee" stroke="#4545b4" stroke-width="0.8"/>
<rect x="362.5" y="529.0" width="10" height="21.5" fill="#8888ee" stroke="#4545b4" stroke-width="0.8"/>
<rect x="372.5" y="525.9" width="10" height="24.6" fill="#8888ee" stroke="#4545b4" stroke-width="0.8"/>
<rect x="382.5" y="523.2" width="10" height="27.3" fill="#8888ee" stroke="#4545b4" stroke-width="0.8"/>
<rect x="392.5" y="525.6" width="10" height="24.9" fill="#8888ee" stroke="#4545b4" stroke-width="0.8"/>
<rect x="402.5" y="529.6" width="10" height="20.9" fill="#8888ee" stroke="#4545b4" stroke-width="0.8"/>
<rect x="412.5" y="534.4" width="10" height="16.1" fill="#8888ee" stroke="#4545b4" stroke-width="0.8"/>
<rect x="422.5" y="539.5" width="10" height="11.0" fill="#8888ee" stroke="#4545b4" stroke-width="0.8"/>
<rect x="432.5" y="544.6" width="10" height="5.9" fill="#8888ee" stroke="#4545b4" stroke-width="0.8"/>
<rect x="442.5" y="549.3" width="10" height="1.2" fill="#8888ee" stroke="#4545b4" stroke-width="0.8"/>
<rect x="452.5" y="551.0" width="10" height="3.6" fill="#8888ee" stroke="#4545b4" stroke-width="0.8"/>
<rect x="462.5" y="551.0" width="10" height="7.4" fill="#8888ee" stroke="#4545b4" stroke-width="0.8"/>
<rect x="472.5" y="551.0" width="10" height="10.7" fill="#8888ee" stroke="#4545b4" stroke-width="0.8"/>
<rect x="482.5" y="551.0" width="10" height="13.5" fill="#8888ee" stroke="#4545b4" stroke-width="0.8"/>
<rect x="492.5" y="551.0" width="10" height="15.8" fill="#8888ee" stroke="#4545b4" stroke-width="0.8"/>
<rect x="502.5" y="551.0" width="10" height="17.6" fill="#8888ee" stroke="#4545b4" stroke-width="0.8"/>
<rect x="512.5" y="551.0" width="10" height="18.9" fill="#8888ee" stroke="#4545b4" stroke-width="0.8"/>
<rect x="522.5" y="551.0" width="10" height="19.9" fill="#8888ee" stroke="#4545b4" stroke-width="0.8"/>
<rect x="532.5" y="551.0" width="10" height="20.5" fill="#8888ee" stroke="#4545b4" stroke-width="0.8"/>
<rect x="542.5" y="551.0" width="10" height="20.9" fill="#8888ee" stroke="#4545b4" stroke-width="0.8"/>
<rect x="552.5" y="551.0" width="10" height="21.0" fill="#8888ee" stroke="#4545b4" stroke-width="0.8"/>
<rect x="562.5" y="551.0" width="10" height="20.8" fill="#8888ee" stroke="#4545b4" stroke-width="0.8"/>
<rect x="572.5" y="551.0" width="10" height="20.6" fill="#8888ee" stroke="#4545b4" stroke-width="0.8"/>
<rect x="582.5" y="551.0" width="10" height="20.1" fill="#8888ee" stroke="#4545b4" stroke-width="0.8"/>
<rect x="592.5" y="551.0" width="10" height="19.6" fill="#8888ee" stroke="#4545b4" stroke-width="0.8"/>
<rect x="602.5" y="551.0" width="10" height="19.0" fill="#8888ee" stroke="#4545b4" stroke-width="0.8"/>
<rect x="612.5" y="551.0" width="10" height="18.3" fill="#8888ee" stroke="#4545b4" stroke-width="0.8"/>
<rect x="622.5" y="551.0" width="10" height="17.5" fill="#8888ee" stroke="#4545b4" stroke-width="0.8"/>
<rect x="632.5" y="551.0" width="10" height="12.2" fill="#8888ee" stroke="#4545b4" stroke-width="0.8"/>
<rect x="642.5" y="551.0" width="10" height="5.7" fill="#8888ee" stroke="#4545b4" stroke-width="0.8"/>
<rect x="652.5" y="548.9" width="10" height="1.6" fill="#8888ee" stroke="#4545b4" stroke-width="0.8"/>
<rect x="662.5" y="542.2" width="10" height="8.3" fill="#8888ee" stroke="#4545b4" stroke-width="0.8"/>
<rect x="672.5" y="540.5" width="10" height="10.0" fill="#8888ee" stroke="#4545b4" stroke-width="0.8"/>
<rect x="682.5" y="540.6" width="10" height="9.9" fill="#8888ee" stroke="#4545b4" stroke-width="0.8"/>
<rect x="692.5" y="541.8" width="10" height="8.7" fill="#8888ee" stroke="#4545b4" stroke-width="0.8"/>
<rect x="702.5" y="543.6" width="10" height="6.9" fill="#8888ee" stroke="#4545b4" stroke-width="0.8"/>
<rect x="712.5" y="545.8" width="10" height="4.7" fill="#8888ee" stroke="#4545b4" stroke-width="0.8"/>
<rect x="722.5" y="548.0" width="10" height="2.5" fill="#8888ee" stroke="#4545b4" stroke-width="0.8"/>
<rect x="732.5" y="545.6" width="10" height="4.9" fill="#8888ee" stroke="#4545b4" stroke-width="0.8"/>
<rect x="742.5" y="542.0" width="10" height="8.5" fill="#8888ee" stroke="#4545b4" stroke-width="0.8"/>
<rect x="752.5" y="537.8" width="10" height="12.7" fill="#8888ee" stroke="#4545b4" stroke-width="0.8"/>
<rect x="762.5" y="533.5" width="10" height="17.0" fill="#8888ee" stroke="#4545b4" stroke-width="0.8"/>
<rect x="772.5" y="529.4" width="10" height="21.1" fill="#8888ee" stroke="#4545b4" stroke-width="0.8"/>
<rect x="782.5" y="525.6" width="10" height="24.9" fill="#8888ee" stroke="#4545b4" stroke-width="0.8"/>
<rect x="792.5" y="522.4" width="10" height="28.1" fill="#8888ee" stroke="#4545b4" stroke-width="0.8"/>
<rect x="802.5" y="524.3" width="10" height="26.2" fill="#8888ee" stroke="#4545b4" stroke-width="0.8"/>
<rect x="812.5" y="523.2" width="10" height="27.3" fill="#8888ee" stroke="#4545b4" stroke-width="0.8"/>
<rect x="822.5" y="526.6" width="10" height="23.9" fill="#8888ee" stroke="#4545b4" stroke-width="0.8"/>
<rect x="832.5" y="526.4" width="10" height="24.1" fill="#8888ee" stroke="#4545b4" stroke-width="0.8"/>
<rect x="842.5" y="525.7" width="10" height="24.8" fill="#8888ee" stroke="#4545b4" stroke-width="0.8"/>
<rect x="852.5" y="529.2" width="10" height="21.3" fill="#8888ee" stroke="#4545b4" stroke-width="0.8"/>
<rect x="862.5" y="533.8" width="10" height="16.7" fill="#8888ee" stroke="#4545b4" stroke-width="0.8"/>
<rect x="872.5" y="538.9" width="10" height="11.6" fill="#8888ee" stroke="#4545b4" stroke-width="0.8"/>
<rect x="882.5" y="544.0" width="10" height="6.5" fill="#8888ee" stroke="#4545b4" stroke-width="0.8"/>
<rect x="892.5" y="548.8" width="10" height="1.7" fill="#8888ee" stroke="#4545b4" stroke-width="0.8"/>
<rect x="902.5" y="551.0" width="10" height="3.2" fill="#8888ee" stroke="#4545b4" stroke-width="0.8"/>
<rect x="912.5" y="551.0" width="10" height="7.2" fill="#8888ee" stroke="#4545b4" stroke-width="0.8"/>
<rect x="922.5" y="551.0" width="10" height="10.6" fill="#8888ee" stroke="#4545b4" stroke-width="0.8"/>
<rect x="932.5" y="551.0" width="10" height="13.5" fill="#8888ee" stroke="#4545b4" stroke-width="0.8"/>
<rect x="942.5" y="551.0" width="10" height="15.9" fill="#8888ee" stroke="#4545b4" stroke-width="0.8"/>
<rect x="952.5" y="551.0" width="10" height="17.8" fill="#8888ee" stroke="#4545b4" stroke-width="0.8"/>
<rect x="962.5" y="551.0" width="10" height="13.8" fill="#8888ee" stroke="#4545b4" stroke-width="0.8"/>
</g>
<g clip-path="url(#cd)" fill="none" stroke-linejoin="round" stroke-linecap="round">
<polyline points="-2.0,593.9 8.0,593.5 18.0,591.9 28.0,589.1 38.0,585.3 48.0,580.6 58.0,575.1 68.0,568.9 78.0,563.4 88.0,559.0 98.0,555.7 108.0,553.9 118.0,553.3 128.0,553.9 138.0,555.7 148.0,558.4 158.0,562.0 168.0,566.2 178.0,569.9 188.0,573.7 198.0,577.8 208.0,582.1 218.0,586.6 228.0,591.4 238.0,596.3 248.0,601.4 258.0,606.5 268.0,611.7 278.0,616.9 288.0,620.8 298.0,623.3 308.0,624.2 318.0,623.4 328.0,621.2 338.0,618.7 348.0,615.3 358.0,610.9 368.0,605.6 378.0,599.6 388.0,592.9 398.0,586.8 408.0,581.7 418.0,577.8 428.0,575.2 438.0,573.8 448.0,573.7 458.0,574.6 468.0,576.5 478.0,579.2 488.0,582.6 498.0,586.5 508.0,591.0 518.0,595.7 528.0,600.7 538.0,605.9 548.0,611.1 558.0,616.4 568.0,621.6 578.0,626.8 588.0,631.8 598.0,636.8 608.0,641.5 618.0,646.1 628.0,650.5 638.0,653.6 648.0,655.1 658.0,654.8 668.0,652.8 678.0,650.5 688.0,648.1 698.0,646.1 708.0,644.5 718.0,643.4 728.0,642.9 738.0,641.8 748.0,639.8 758.0,636.8 768.0,632.7 778.0,627.5 788.0,621.4 798.0,614.5 808.0,608.1 818.0,601.4 828.0,595.5 838.0,589.6 848.0,583.5 858.0,578.3 868.0,574.3 878.0,571.5 888.0,570.0 898.0,569.7 908.0,570.5 918.0,572.3 928.0,575.0 938.0,578.4 948.0,582.4 958.0,586.9 968.0,590.4" stroke="#3da3cb" stroke-width="2.2"/>
<polyline points="-2.0,597.0 8.0,591.8 18.0,585.4 28.0,578.0 38.0,570.1 48.0,561.7 58.0,553.0 68.0,544.3 78.0,541.4 88.0,541.1 98.0,542.9 108.0,546.4 118.0,551.0 128.0,556.5 138.0,562.7 148.0,569.3 158.0,576.2 168.0,583.2 178.0,584.5 188.0,589.0 198.0,594.0 208.0,599.3 218.0,604.8 228.0,610.4 238.0,616.0 248.0,621.6 258.0,627.1 268.0,632.4 278.0,637.6 288.0,636.8 298.0,633.3 308.0,627.7 318.0,620.5 328.0,612.1 338.0,608.7 348.0,601.5 358.0,593.4 368.0,584.7 378.0,575.5 388.0,566.1 398.0,562.4 408.0,561.3 418.0,562.2 428.0,564.7 438.0,568.4 448.0,573.0 458.0,578.3 468.0,584.0 478.0,590.0 488.0,596.2 498.0,602.4 508.0,608.6 518.0,614.7 528.0,620.7 538.0,626.5 548.0,632.1 558.0,637.5 568.0,642.6 578.0,647.4 588.0,652.1 598.0,656.5 608.0,660.6 618.0,664.5 628.0,668.2 638.0,665.9 648.0,660.8 658.0,653.7 668.0,645.1 678.0,641.0 688.0,638.7 698.0,637.9 708.0,638.1 718.0,639.2 728.0,640.9 738.0,637.5 748.0,631.8 758.0,624.6 768.0,616.1 778.0,606.8 788.0,597.0 798.0,586.9 808.0,582.3 818.0,574.6 828.0,572.1 838.0,566.0 848.0,559.2 858.0,557.6 868.0,558.1 878.0,560.4 888.0,564.0 898.0,568.5 908.0,573.8 918.0,579.6 928.0,585.7 938.0,592.0 948.0,598.4 958.0,604.8 968.0,604.3" stroke="#f7cd25" stroke-width="2.2"/>
</g>
<rect x="0" y="517" width="230" height="17" fill="#141313" fill-opacity="0.28"/>
<rect x="5" y="525.5" width="8" height="3" fill="#f7cd25"/>
<text x="19" y="530" fill="#f7cd25">MACD(12, 26, 9)</text><text x="114" y="530" fill="#f7cd25">-28,08</text><text x="155" y="530" fill="#3da3cb">-20,82</text><text x="196" y="530" fill="#5f5da6">-7,26</text>
<text x="1211.5" y="552.9" text-anchor="end" fill="#979797">0,00</text>
<rect x="1215" y="549.6" width="3" height="1" fill="#979797"/>
<text x="1211.5" y="600.9" text-anchor="end" fill="#979797">-25,00</text>
<rect x="1215" y="597.6" width="3" height="1" fill="#979797"/>
<text x="1211.5" y="648.9" text-anchor="end" fill="#979797">-50,00</text>
<rect x="1215" y="645.6" width="3" height="1" fill="#979797"/>
<g clip-path="url(#c30)"><polygon points="-2.0,768.2 8.0,763.6 18.0,759.3 28.0,755.1 38.0,751.1 48.0,747.4 58.0,743.8 68.0,740.4 78.0,750.7 88.0,755.3 98.0,759.6 108.0,763.8 118.0,767.7 128.0,771.5 138.0,775.0 148.0,778.3 158.0,781.5 168.0,784.4 178.0,772.8 188.0,779.2 198.0,782.0 208.0,784.7 218.0,787.3 228.0,789.8 238.0,792.1 248.0,794.3 258.0,796.4 268.0,798.4 278.0,800.2 288.0,786.8 298.0,780.8 308.0,775.2 318.0,769.8 328.0,764.7 338.0,772.2 348.0,762.8 358.0,758.5 368.0,754.4 378.0,750.6 388.0,746.9 398.0,756.1 408.0,760.3 418.0,764.2 428.0,768.0 438.0,771.6 448.0,775.0 458.0,778.3 468.0,781.3 478.0,784.2 488.0,787.0 498.0,789.6 508.0,792.0 518.0,794.3 528.0,796.5 538.0,798.6 548.0,800.5 558.0,802.3 568.0,804.0 578.0,805.6 588.0,807.0 598.0,808.4 608.0,809.7 618.0,810.9 628.0,812.1 638.0,796.3 648.0,789.4 658.0,782.8 668.0,776.7 678.0,783.0 688.0,785.8 698.0,788.4 708.0,790.9 718.0,793.3 728.0,795.5 738.0,782.5 748.0,776.7 758.0,771.3 768.0,766.1 778.0,761.2 788.0,756.6 798.0,752.3 808.0,761.5 818.0,753.1 828.0,761.3 838.0,753.6 848.0,750.1 858.0,758.2 868.0,761.9 878.0,765.5 888.0,769.0 898.0,772.3 908.0,775.4 918.0,778.4 928.0,781.3 938.0,784.1 948.0,786.7 958.0,789.2 968.0,775.0 968,786.0 -2,786.0" fill="#eeaaaa" fill-rule="evenodd"/></g>
<g clip-path="url(#cr)" fill="none" stroke-linejoin="round" stroke-linecap="round">
<polyline points="-2.0,768.2 8.0,763.6 18.0,759.3 28.0,755.1 38.0,751.1 48.0,747.4 58.0,743.8 68.0,740.4 78.0,750.7 88.0,755.3 98.0,759.6 108.0,763.8 118.0,767.7 128.0,771.5 138.0,775.0 148.0,778.3 158.0,781.5 168.0,784.4 178.0,772.8 188.0,779.2 198.0,782.0 208.0,784.7 218.0,787.3 228.0,789.8 238.0,792.1 248.0,794.3 258.0,796.4 268.0,798.4 278.0,800.2 288.0,786.8 298.0,780.8 308.0,775.2 318.0,769.8 328.0,764.7 338.0,772.2 348.0,762.8 358.0,758.5 368.0,754.4 378.0,750.6 388.0,746.9 398.0,756.1 408.0,760.3 418.0,764.2 428.0,768.0 438.0,771.6 448.0,775.0 458.0,778.3 468.0,781.3 478.0,784.2 488.0,787.0 498.0,789.6 508.0,792.0 518.0,794.3 528.0,796.5 538.0,798.6 548.0,800.5 558.0,802.3 568.0,804.0 578.0,805.6 588.0,807.0 598.0,808.4 608.0,809.7 618.0,810.9 628.0,812.1 638.0,796.3 648.0,789.4 658.0,782.8 668.0,776.7 678.0,783.0 688.0,785.8 698.0,788.4 708.0,790.9 718.0,793.3 728.0,795.5 738.0,782.5 748.0,776.7 758.0,771.3 768.0,766.1 778.0,761.2 788.0,756.6 798.0,752.3 808.0,761.5 818.0,753.1 828.0,761.3 838.0,753.6 848.0,750.1 858.0,758.2 868.0,761.9 878.0,765.5 888.0,769.0 898.0,772.3 908.0,775.4 918.0,778.4 928.0,781.3 938.0,784.1 948.0,786.7 958.0,789.2 968.0,775.0" stroke="#f7cd25" stroke-width="2.2"/>
</g>
<rect x="0" y="680" width="104" height="17" fill="#141313" fill-opacity="0.28"/>
<rect x="5" y="689" width="8" height="3" fill="#f7cd25"/>
<text x="19" y="693" fill="#f7cd25">RSI(14)</text><text x="67" y="693" fill="#f7cd25">37,98</text>
<text x="1211.5" y="693.5" text-anchor="end" fill="#979797">100,00</text>
<rect x="1215" y="690.2" width="3" height="1" fill="#979797"/>
<text x="1211.5" y="761.6" text-anchor="end" fill="#979797">50,00</text>
<rect x="1215" y="758.3" width="3" height="1" fill="#979797"/>
<text x="1211.5" y="829.7" text-anchor="end" fill="#979797">0,00</text>
<rect x="1215" y="826.4" width="3" height="1" fill="#979797"/>
<rect x="0" y="831" width="27" height="10" fill="#060606"/>
<rect x="-2.0" y="834.3" width="4.7" height="4.7" fill="#103a5c"/>
<rect x="5.0" y="834.3" width="4.8" height="4.7" fill="#1f431f"/>
<rect x="12.1" y="834.3" width="4.8" height="4.7" fill="#74380f"/>
<rect x="19.0" y="834.3" width="4.9" height="4.7" fill="#6a6232"/>
</svg>
<div id="rb"></div><div id="rb2"></div><div id="bb"></div>
<svg width="1221" height="841" viewBox="0 0 1221 841" style="position:absolute;left:0;top:0;pointer-events:none"><path d="M1203.5 841 L1219.5 825 V841Z" fill="#3e3e3e"/><path d="M1212 839.7 L1217 834.5 V839.7Z" fill="#f4f4f4"/></svg>
</body></html>
